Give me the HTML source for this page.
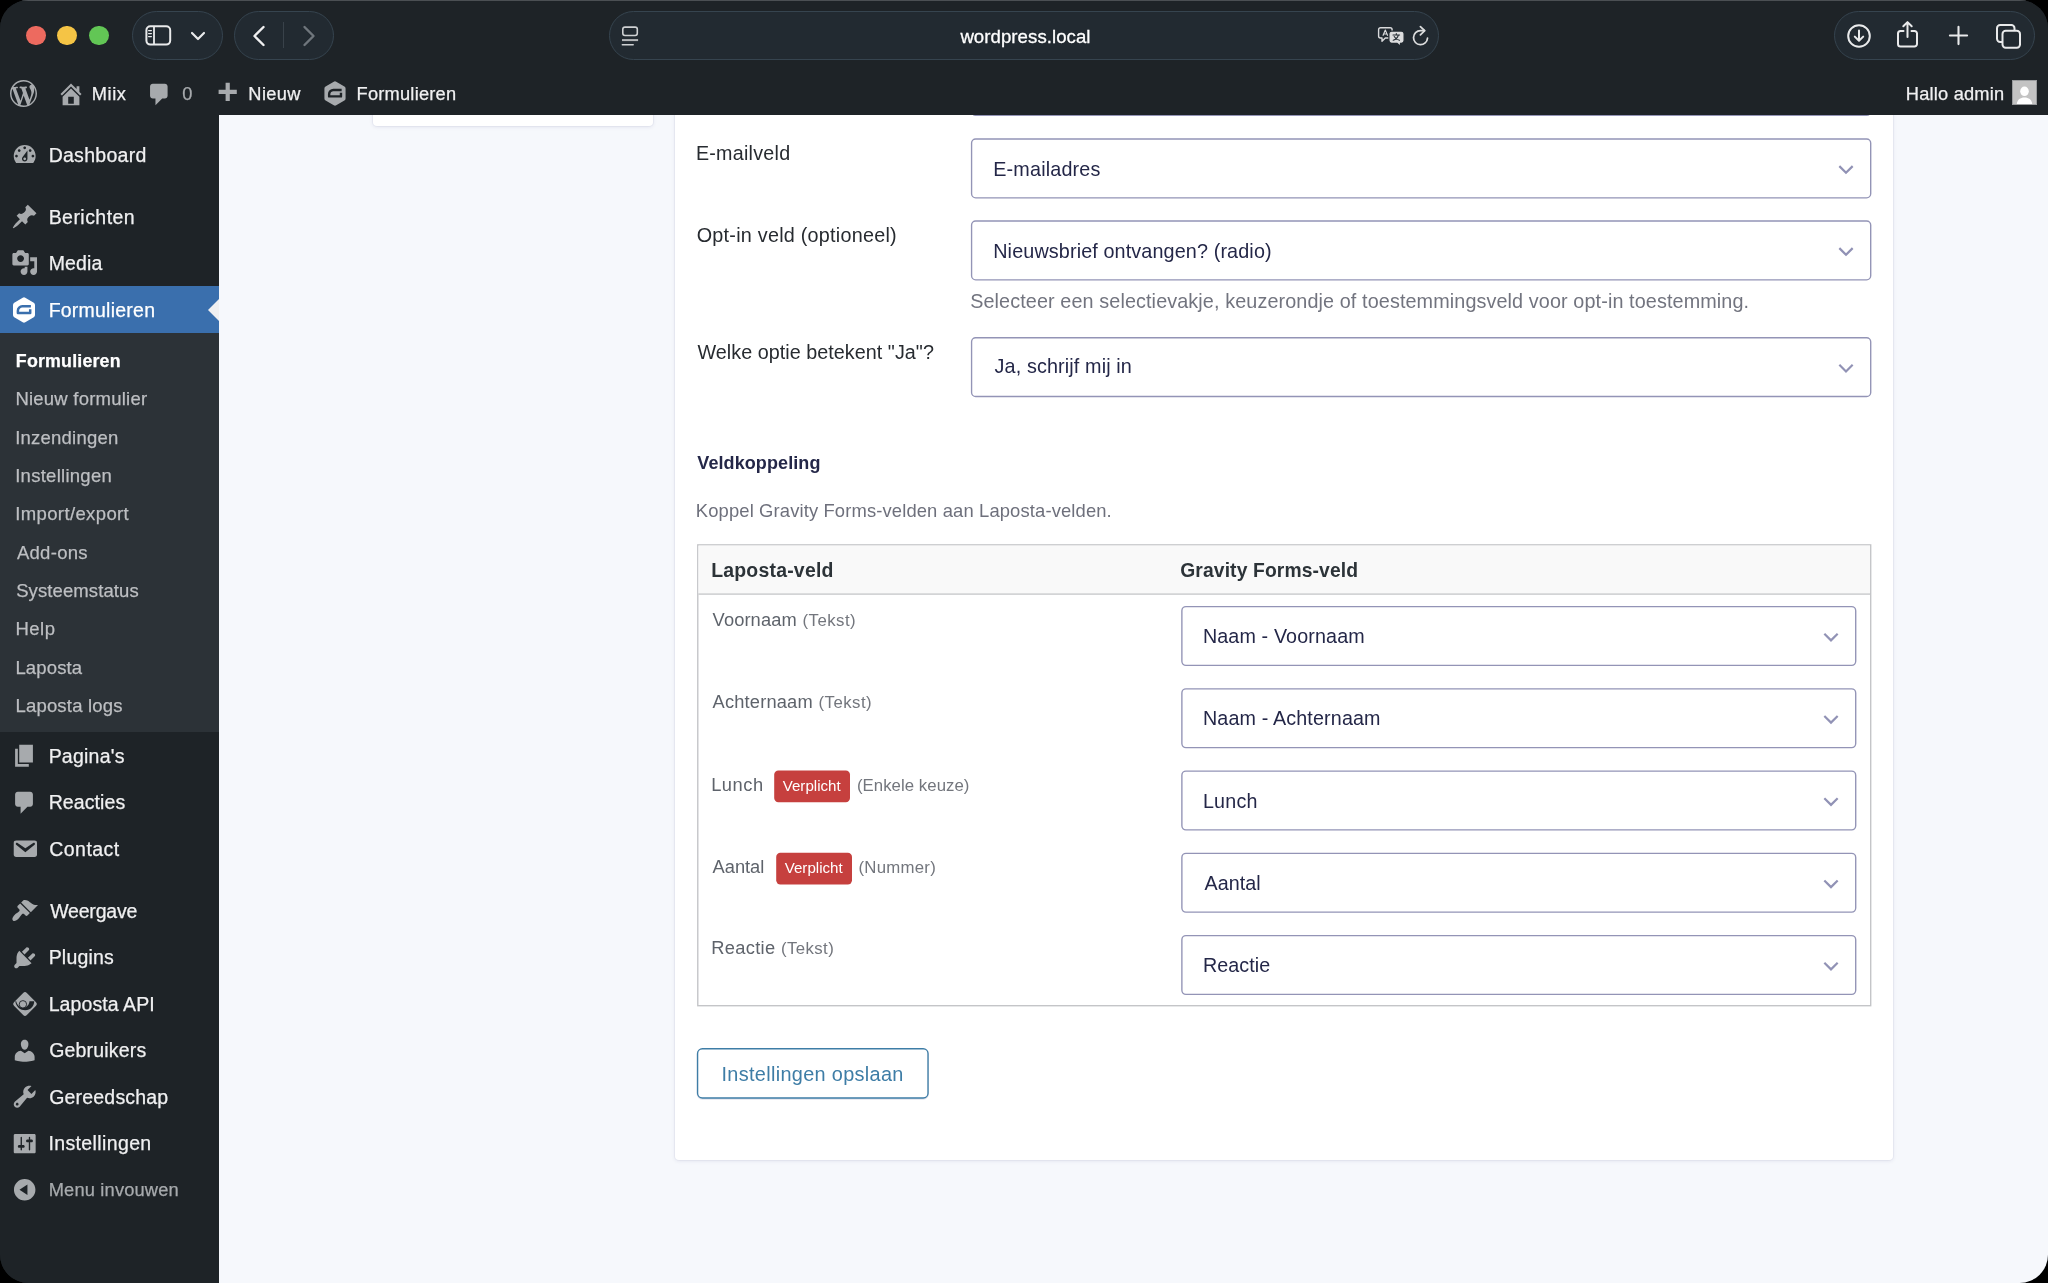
<!DOCTYPE html>
<html lang="nl">
<head>
<meta charset="utf-8">
<title>wordpress.local</title>
<style>
*{box-sizing:border-box;margin:0;padding:0}
html,body{width:2048px;height:1283px;overflow:hidden;background:#000}
body{font-family:"Liberation Sans",sans-serif;position:relative}
#win{position:absolute;left:0;top:0;width:2048px;height:1283px;border-radius:28.500px;overflow:hidden;background:#1e2327;will-change:transform}
#bg{position:absolute;left:219px;top:115px;width:1829px;height:1168px;background:#f6f8fc}
.abs{position:absolute}
.t{position:absolute;white-space:nowrap;line-height:1}
#chrome{position:absolute;left:0;top:0;width:2048px;height:72px;background:#1e2327}
#topline{position:absolute;left:0;top:0;width:2048px;height:1px;background:#4b4f53}
.tl{position:absolute;top:25.700px;width:19.500px;height:19.500px;border-radius:50%}
.pill{position:absolute;top:11px;height:49px;border-radius:25px;background:#222a31;border:1px solid #36444f}
#adminbar{position:absolute;left:0;top:72px;width:2048px;height:43px}
#adminbar .t{color:#f0f0f1;font-size:18.250px;top:13px;-webkit-text-stroke:0.250px currentColor}
#card{position:absolute;left:675px;top:100px;width:1218px;height:1060px;background:#fff;border-radius:4px;box-shadow:0 1px 4px rgba(18,25,97,.09),0 0 0 1px rgba(18,25,97,.035)}
#lcard{position:absolute;left:373px;top:100px;width:280px;height:26px;background:#fff;border-radius:4px;box-shadow:0 1px 4px rgba(18,25,97,.09),0 0 0 1px rgba(18,25,97,.035)}
.sel{position:absolute;background:#fff;border:1.400px solid #9092b4;border-radius:5px}
</style>
</head>
<body>
<div id="win">
<!-- main content -->
<div id="bg"></div><div id="lcard"></div><div id="card"></div>
<svg class="abs" style="left:0;top:0" width="2048" height="1283" viewBox="0 0 2048 1283"><rect x="971.58" y="56.69" width="899.13" height="58.73" rx="4.100" fill="#fff" stroke="#9394b6" stroke-width="1.37"/><path d="M1839.33 83.78L1846.00 90.45L1852.67 83.78" fill="none" stroke="#9192b5" stroke-width="2.200"/><rect x="971.58" y="138.99" width="899.13" height="58.83" rx="4.100" fill="#fff" stroke="#9394b6" stroke-width="1.37"/><path d="M1839.33 166.13L1846.00 172.80L1852.67 166.13" fill="none" stroke="#9192b5" stroke-width="2.200"/><rect x="971.58" y="220.99" width="899.13" height="58.83" rx="4.100" fill="#fff" stroke="#9394b6" stroke-width="1.37"/><path d="M1839.33 248.13L1846.00 254.80L1852.67 248.13" fill="none" stroke="#9192b5" stroke-width="2.200"/><rect x="971.58" y="337.69" width="899.13" height="58.83" rx="4.100" fill="#fff" stroke="#9394b6" stroke-width="1.37"/><path d="M1839.33 364.83L1846.00 371.50L1852.67 364.83" fill="none" stroke="#9192b5" stroke-width="2.200"/><rect x="697.78" y="544.88" width="1172.93" height="460.83" fill="#fff" stroke="#c3c4c7" stroke-width="1.37"/><rect x="698.47" y="545.57" width="1171.56" height="47.83" fill="#f9f9f9"/><rect x="698.47" y="593.400" width="1171.56" height="1.37" fill="#c7c8ca"/><rect x="1181.88" y="606.58" width="673.83" height="58.83" rx="4.100" fill="#fff" stroke="#9394b6" stroke-width="1.37"/><path d="M1824.33 633.73L1831.00 640.40L1837.67 633.73" fill="none" stroke="#9192b5" stroke-width="2.200"/><rect x="1181.88" y="688.83" width="673.83" height="58.83" rx="4.100" fill="#fff" stroke="#9394b6" stroke-width="1.37"/><path d="M1824.33 715.98L1831.00 722.65L1837.67 715.98" fill="none" stroke="#9192b5" stroke-width="2.200"/><rect x="1181.88" y="771.08" width="673.83" height="58.83" rx="4.100" fill="#fff" stroke="#9394b6" stroke-width="1.37"/><path d="M1824.33 798.23L1831.00 804.90L1837.67 798.23" fill="none" stroke="#9192b5" stroke-width="2.200"/><rect x="774.2" y="770.50" width="75.800" height="31.700" rx="4.200" fill="#c6403e"/><rect x="1181.88" y="853.33" width="673.83" height="58.83" rx="4.100" fill="#fff" stroke="#9394b6" stroke-width="1.37"/><path d="M1824.33 880.48L1831.00 887.15L1837.67 880.48" fill="none" stroke="#9192b5" stroke-width="2.200"/><rect x="776.2" y="852.75" width="75.800" height="31.700" rx="4.200" fill="#c6403e"/><rect x="1181.88" y="935.58" width="673.83" height="58.83" rx="4.100" fill="#fff" stroke="#9394b6" stroke-width="1.37"/><path d="M1824.33 962.73L1831.00 969.40L1837.67 962.73" fill="none" stroke="#9192b5" stroke-width="2.200"/><rect x="697.58" y="1049.58" width="230.43" height="49.23" rx="4.800" fill="none" stroke="rgba(18,25,97,.12)" stroke-width="1.9700000000000002"/><rect x="697.58" y="1048.78" width="230.43" height="49.23" rx="4.800" fill="#fff" stroke="#3e7da6" stroke-width="1.37"/></svg>
<div class="t" style="left:695.92px;top:144px;font-size:19.7px;color:#272b30;letter-spacing:0.258px;">E-mailveld</div>
<div class="t" style="left:993.22px;top:160px;font-size:19.75px;color:#242748;letter-spacing:0.181px;">E-mailadres</div>
<div class="t" style="left:696.71px;top:226px;font-size:19.8px;color:#272b30;letter-spacing:0.243px;">Opt-in veld (optioneel)</div>
<div class="t" style="left:993.22px;top:242px;font-size:19.8px;color:#242748;letter-spacing:0.120px;">Nieuwsbrief ontvangen? (radio)</div>
<div class="t" style="left:970.21px;top:292px;font-size:19.8px;color:#72747f;letter-spacing:0.109px;">Selecteer een selectievakje, keuzerondje of toestemmingsveld voor opt-in toestemming.</div>
<div class="t" style="left:697.50px;top:343px;font-size:19.77px;color:#272b30;letter-spacing:0.030px;">Welke optie betekent &quot;Ja&quot;?</div>
<div class="t" style="left:994.60px;top:357px;font-size:19.8px;color:#242748;letter-spacing:0.117px;">Ja, schrijf mij in</div>
<div class="t" style="left:697.30px;top:454px;font-size:18.0px;color:#242748;font-weight:700;letter-spacing:0.090px;">Veldkoppeling</div>
<div class="t" style="left:695.83px;top:502px;font-size:18.4px;color:#6e707c;letter-spacing:0.130px;">Koppel Gravity Forms-velden aan Laposta-velden.</div>
<div class="t" style="left:711.13px;top:561px;font-size:19.45px;color:#2c3338;font-weight:700;letter-spacing:0.217px;">Laposta-veld</div>
<div class="t" style="left:1180.23px;top:561px;font-size:19.3px;color:#2c3338;font-weight:700;letter-spacing:0.120px;">Gravity Forms-veld</div>
<div class="t" style="left:712.60px;top:611px;font-size:18.3px;color:#5e636b;letter-spacing:0.104px;">Voornaam</div>
<div class="t" style="left:802.49px;top:613px;font-size:16.8px;color:#73767d;letter-spacing:0.466px;">(Tekst)</div>
<div class="t" style="left:1202.92px;top:627px;font-size:19.7px;color:#242748;letter-spacing:0.140px;">Naam - Voornaam</div>
<div class="t" style="left:712.60px;top:693px;font-size:18.3px;color:#5e636b;letter-spacing:0.165px;">Achternaam</div>
<div class="t" style="left:818.49px;top:695px;font-size:16.8px;color:#73767d;letter-spacing:0.466px;">(Tekst)</div>
<div class="t" style="left:1202.92px;top:709px;font-size:19.7px;color:#242748;letter-spacing:0.159px;">Naam - Achternaam</div>
<div class="t" style="left:711.14px;top:776px;font-size:18.3px;color:#5e636b;letter-spacing:0.533px;">Lunch</div>
<div class="t" style="left:782.70px;top:778px;font-size:15.1px;color:#fff;letter-spacing:0.019px;">Verplicht</div>
<div class="t" style="left:856.89px;top:778px;font-size:16.8px;color:#73767d;letter-spacing:0.050px;">(Enkele keuze)</div>
<div class="t" style="left:1202.92px;top:792px;font-size:19.7px;color:#242748;letter-spacing:0.252px;">Lunch</div>
<div class="t" style="left:712.60px;top:858px;font-size:18.3px;color:#5e636b;letter-spacing:-0.030px;">Aantal</div>
<div class="t" style="left:784.70px;top:860px;font-size:15.1px;color:#fff;letter-spacing:0.019px;">Verplicht</div>
<div class="t" style="left:858.39px;top:860px;font-size:16.8px;color:#73767d;letter-spacing:0.272px;">(Nummer)</div>
<div class="t" style="left:1204.50px;top:874px;font-size:19.7px;color:#242748;letter-spacing:0.073px;">Aantal</div>
<div class="t" style="left:711.14px;top:939px;font-size:18.3px;color:#5e636b;letter-spacing:0.346px;">Reactie</div>
<div class="t" style="left:780.89px;top:941px;font-size:16.8px;color:#73767d;letter-spacing:0.416px;">(Tekst)</div>
<div class="t" style="left:1202.92px;top:956px;font-size:19.7px;color:#242748;letter-spacing:0.082px;">Reactie</div>
<div class="t" style="left:721.51px;top:1065px;font-size:19.9px;color:#3e7da6;letter-spacing:0.316px;">Instellingen opslaan</div>
<!-- sidebar -->
<div class="abs" style="left:0;top:115px;width:219px;height:1168px;background:#1e2327"></div>
<div class="abs" style="left:0;top:286px;width:219px;height:46.600px;background:#3a6fad"></div>
<div class="abs" style="left:0;top:332.500px;width:219px;height:399.500px;background:#2c3237"></div>
<svg class="abs" style="left:11.00px;top:140.80px" width="27.4" height="27.4" viewBox="0 0 20 20"><path fill="#a7aaad" d="M3.760 16h12.480c1.100-1.370 1.760-3.110 1.760-5 0-4.420-3.580-8-8-8s-8 3.580-8 8c0 1.890.660 3.630 1.760 5zM10 4c.550 0 1 .450 1 1s-.450 1-1 1-1-.450-1-1 .450-1 1-1zM6 6c.550 0 1 .450 1 1s-.450 1-1 1-1-.450-1-1 .450-1 1-1zm8 0c.550 0 1 .450 1 1s-.450 1-1 1-1-.450-1-1 .450-1 1-1zm-5.370 5.550L12 7v6c0 1.100-.900 2-2 2s-2-.900-2-2c0-.570.240-1.080.630-1.450zM4 10c.550 0 1 .450 1 1s-.450 1-1 1-1-.450-1-1 .450-1 1-1zm12 0c.550 0 1 .450 1 1s-.450 1-1 1-1-.450-1-1 .450-1 1-1zm-5 3c0-.550-.450-1-1-1s-1 .450-1 1 .450 1 1 1 1-.450 1-1z"/></svg>
<div class="t" style="left:48.64px;top:146px;font-size:19.5px;color:#f0f0f1;letter-spacing:0.282px;-webkit-text-stroke:0.250px #f0f0f1;">Dashboard</div>
<svg class="abs" style="left:11.00px;top:202.80px" width="27.4" height="27.4" viewBox="0 0 20 20"><path fill="#a7aaad" d="M10.440 3.020l1.820-1.820 6.360 6.350-1.830 1.820c-1.050-.680-2.480-.570-3.410.360l-.750.750c-.920.930-1.040 2.350-.350 3.410l-1.830 1.820-2.410-2.410-2.800 2.790c-.420.420-3.380 2.710-3.800 2.290s1.860-3.390 2.280-3.810l2.790-2.790L4.100 9.360l1.830-1.820c1.050.690 2.480.570 3.400-.360l.750-.750c.930-.920 1.050-2.350.360-3.410z"/></svg>
<div class="t" style="left:48.64px;top:208px;font-size:19.5px;color:#f0f0f1;letter-spacing:0.459px;-webkit-text-stroke:0.250px #f0f0f1;">Berichten</div>
<svg class="abs" style="left:11.00px;top:249.00px" width="27.4" height="27.4" viewBox="0 0 20 20"><path fill="#a7aaad" d="M13 11V4c0-.550-.450-1-1-1h-1.670L9 1H5L3.670 3H2c-.550 0-1 .450-1 1v7c0 .550.450 1 1 1h10c.550 0 1-.450 1-1zM7 4.500c1.380 0 2.500 1.120 2.500 2.500S8.380 9.500 7 9.500 4.500 8.380 4.500 7 5.620 4.500 7 4.500zM14 6h5v10.500c0 1.380-1.120 2.500-2.500 2.500S14 17.880 14 16.500s1.120-2.500 2.500-2.500c.170 0 .340.020.500.050V9h-3V6zm-4 8.050V13h2v3.500c0 1.380-1.120 2.500-2.500 2.500S7 17.880 7 16.500 8.120 14 9.500 14c.170 0 .340.020.500.050z"/></svg>
<div class="t" style="left:48.64px;top:254px;font-size:19.5px;color:#f0f0f1;letter-spacing:0.144px;-webkit-text-stroke:0.250px #f0f0f1;">Media</div>
<svg class="abs" style="left:11.00px;top:742.30px" width="27.4" height="27.4" viewBox="0 0 20 20"><path fill="#a7aaad" d="M6 15V2h10v13H6zm-1 1h8v2H3V5h2v11z"/></svg>
<div class="t" style="left:48.64px;top:747px;font-size:19.5px;color:#f0f0f1;letter-spacing:0.236px;-webkit-text-stroke:0.250px #f0f0f1;">Pagina's</div>
<svg class="abs" style="left:11.00px;top:788.80px" width="27.4" height="27.4" viewBox="0 0 20 20"><path fill="#a7aaad" d="M5 2h9c1.100 0 2 .900 2 2v7c0 1.100-.900 2-2 2h-2l-5 5v-5H5c-1.100 0-2-.900-2-2V4c0-1.100.900-2 2-2z"/></svg>
<div class="t" style="left:48.64px;top:793px;font-size:19.5px;color:#f0f0f1;letter-spacing:0.111px;-webkit-text-stroke:0.250px #f0f0f1;">Reacties</div>
<svg class="abs" style="left:11.00px;top:835.30px" width="27.4" height="27.4" viewBox="0 0 20 20"><path fill="#a7aaad" d="M3.870 4h13.250C18.370 4 19 4.590 19 5.790v8.420c0 1.190-.630 1.790-1.880 1.790H3.870c-1.250 0-1.880-.600-1.880-1.790V5.790c0-1.200.630-1.790 1.880-1.790zm6.620 8.600l6.740-5.530c.240-.200.430-.660.130-1.070-.290-.410-.820-.420-1.170-.170l-5.700 3.860L4.800 5.830c-.350-.250-.880-.240-1.170.170-.300.410-.110.870.130 1.070z"/></svg>
<div class="t" style="left:49.23px;top:840px;font-size:19.5px;color:#f0f0f1;letter-spacing:0.472px;-webkit-text-stroke:0.250px #f0f0f1;">Contact</div>
<svg class="abs" style="left:11.00px;top:897.10px" width="27.4" height="27.4" viewBox="0 0 20 20"><path fill="#a7aaad" d="M14.480 11.060L7.410 3.990l1.500-1.500c.500-.560 2.300-.470 3.510.320 1.210.800 1.430 1.280 2.910 2.100 1.180.640 2.450 1.260 4.450.850zm-.710.710L6.700 4.700 4.930 6.470c-.390.390-.390 1.020 0 1.410l1.060 1.060c.390.390.390 1.030 0 1.420-.600.600-1.430 1.110-2.210 1.690-.350.260-.700.530-1.010.840C1.430 14.230.400 16.080 1.400 17.070c.990 1 2.840-.030 4.180-1.360.310-.310.580-.660.850-1.020.570-.780 1.080-1.610 1.690-2.210.390-.390 1.020-.390 1.410 0l1.060 1.060c.390.390 1.020.390 1.410 0z"/></svg>
<div class="t" style="left:50.20px;top:902px;font-size:19.5px;color:#f0f0f1;letter-spacing:-0.188px;-webkit-text-stroke:0.250px #f0f0f1;">Weergave</div>
<svg class="abs" style="left:11.00px;top:943.60px" width="27.4" height="27.4" viewBox="0 0 20 20"><path fill="#a7aaad" d="M13.110 4.360L9.870 7.600 8 5.730l3.240-3.240c.350-.340 1.050-.200 1.560.320.520.510.660 1.210.310 1.550zm-8 1.770l.910-1.120 9.010 9.010-1.190.840c-.710.710-2.630 1.160-3.820 1.160H6.140L4.900 17.260c-.590.590-1.540.590-2.120 0-.590-.580-.590-1.530 0-2.120l1.240-1.240v-3.880c0-1.130.400-3.190 1.090-3.890zm7.260 3.970l3.240-3.240c.340-.350 1.040-.210 1.550.310.520.510.660 1.210.310 1.550l-3.240 3.250z"/></svg>
<div class="t" style="left:48.64px;top:948px;font-size:19.5px;color:#f0f0f1;letter-spacing:0.215px;-webkit-text-stroke:0.250px #f0f0f1;">Plugins</div>
<svg class="abs" style="left:11.00px;top:1036.80px" width="27.4" height="27.4" viewBox="0 0 20 20"><path fill="#a7aaad" d="M10 9.250c-2.270 0-2.730-3.440-2.730-3.440C7 4.020 7.820 2 9.970 2c2.160 0 2.980 2.020 2.710 3.810 0 0-.410 3.440-2.680 3.440zm0 2.570L12.720 10c2.390 0 4.520 2.330 4.520 4.530v2.490s-3.650 1.130-7.240 1.130c-3.650 0-7.240-1.130-7.240-1.130v-2.490c0-2.250 1.940-4.480 4.470-4.480z"/></svg>
<div class="t" style="left:49.23px;top:1041px;font-size:19.5px;color:#f0f0f1;letter-spacing:0.177px;-webkit-text-stroke:0.250px #f0f0f1;">Gebruikers</div>
<svg class="abs" style="left:11.00px;top:1083.30px" width="27.4" height="27.4" viewBox="0 0 20 20"><path fill="#a7aaad" d="M16.680 9.770c-1.340 1.340-3.300 1.670-4.950.990l-5.410 6.520c-.990.990-2.590.990-3.580 0s-.990-2.590 0-3.570l6.520-5.420c-.680-1.650-.350-3.610.990-4.950 1.280-1.280 3.120-1.620 4.720-1.060l-2.890 2.890 2.820 2.820 2.860-2.870c.530 1.580.180 3.390-1.080 4.650zM3.810 16.210c.400.390 1.040.390 1.430 0 .400-.400.400-1.040 0-1.430-.390-.400-1.030-.400-1.430 0-.390.390-.390 1.030 0 1.430z"/></svg>
<div class="t" style="left:49.23px;top:1088px;font-size:19.5px;color:#f0f0f1;letter-spacing:0.190px;-webkit-text-stroke:0.250px #f0f0f1;">Gereedschap</div>
<svg class="abs" style="left:11.00px;top:1129.80px" width="27.4" height="27.4" viewBox="0 0 20 20"><path fill="#a7aaad" d="M18 16V4c0-.550-.450-1-1-1H3c-.550 0-1 .450-1 1v12c0 .550.450 1 1 1h14c.550 0 1-.450 1-1zM8 11h1c.550 0 1 .450 1 1s-.450 1-1 1H8v1.500c0 .280-.220.500-.500.500s-.500-.220-.500-.500V13H6c-.550 0-1-.450-1-1s.450-1 1-1h1V5.500c0-.280.220-.500.500-.500s.500.220.500.500V11zm5-2h-1c-.550 0-1-.450-1-1s.450-1 1-1h1V5.500c0-.280.220-.500.500-.500s.500.220.500.500V7h1c.550 0 1 .450 1 1s-.450 1-1 1h-1v5.500c0 .280-.220.500-.500.500s-.500-.220-.500-.500V9z"/></svg>
<div class="t" style="left:48.45px;top:1134px;font-size:19.5px;color:#f0f0f1;letter-spacing:0.373px;-webkit-text-stroke:0.250px #f0f0f1;">Instellingen</div>
<svg class="abs" style="left:13.100px;top:297.050px" width="22" height="26" viewBox="0 0 22 26"><path d="M11 2.890L19.500 7.910V18.090L11 23.110L2.500 18.090V7.910Z" fill="#fff" stroke="#fff" stroke-width="5" stroke-linejoin="round"/><path d="M17.900 9.300H9.300A4.400 4.400 0 0 0 4.900 13.700V16H17.200V12.200" fill="none" stroke="#3a6fad" stroke-width="2.500" stroke-linejoin="round"/></svg>
<div class="t" style="left:48.64px;top:301px;font-size:19.5px;color:#fff;letter-spacing:0.232px;-webkit-text-stroke:0.250px #fff;">Formulieren</div>
<svg class="abs" style="left:208.200px;top:298.500px" width="11" height="22" viewBox="0 0 11 22"><path d="M11 0L0 11l11 11z" fill="#f0f0f1"/></svg>
<svg class="abs" style="left:10.700px;top:989.700px" width="28" height="28" viewBox="0 0 28 28"><rect x="4.900" y="4.900" width="18.200" height="18.200" rx="2.600" transform="rotate(45 14 14)" fill="#a7aaad"/><path d="M4.300 11.300C5 17 9.500 20.300 14.200 20.300C19.500 20.300 23.200 16 23.200 11.300L18.500 11.300C18.300 14.500 16 17.600 12.200 17.600C8.500 17.600 6 15 5.200 11.300Z" fill="#1e2327"/><circle cx="11.900" cy="14.300" r="3.700" fill="#a7aaad" stroke="#1e2327" stroke-width="0.900"/></svg>
<div class="t" style="left:48.64px;top:995px;font-size:19.5px;color:#f0f0f1;letter-spacing:0.093px;-webkit-text-stroke:0.250px #f0f0f1;">Laposta API</div>
<svg class="abs" style="left:11.00px;top:1176.00px" width="27.4" height="27.4" viewBox="0 0 20 20"><path fill="#a7aaad" d="M10 2.160c4.330 0 7.840 3.510 7.840 7.840s-3.510 7.840-7.840 7.840S2.160 14.330 2.160 10 5.670 2.160 10 2.160zm2 11.720V6.120L6.180 9.970z"/></svg>
<div class="t" style="left:48.74px;top:1181px;font-size:18.3px;color:#a7aaad;letter-spacing:0.159px;-webkit-text-stroke:0.250px #a7aaad;">Menu invouwen</div>
<div class="t" style="left:15.83px;top:353px;font-size:17.8px;color:#fff;font-weight:700;letter-spacing:0.199px;-webkit-text-stroke:0.250px #fff;">Formulieren</div>
<div class="t" style="left:15.42px;top:390px;font-size:18.5px;color:#bdbfc2;letter-spacing:0.230px;-webkit-text-stroke:0.250px #bdbfc2;">Nieuw formulier</div>
<div class="t" style="left:15.23px;top:429px;font-size:18.5px;color:#bdbfc2;letter-spacing:0.219px;-webkit-text-stroke:0.250px #bdbfc2;">Inzendingen</div>
<div class="t" style="left:15.23px;top:467px;font-size:18.5px;color:#bdbfc2;letter-spacing:0.265px;-webkit-text-stroke:0.250px #bdbfc2;">Instellingen</div>
<div class="t" style="left:15.23px;top:505px;font-size:18.5px;color:#bdbfc2;letter-spacing:0.378px;-webkit-text-stroke:0.250px #bdbfc2;">Import/export</div>
<div class="t" style="left:16.90px;top:544px;font-size:18.5px;color:#bdbfc2;letter-spacing:0.292px;-webkit-text-stroke:0.250px #bdbfc2;">Add-ons</div>
<div class="t" style="left:16.16px;top:582px;font-size:18.5px;color:#bdbfc2;letter-spacing:0.106px;-webkit-text-stroke:0.250px #bdbfc2;">Systeemstatus</div>
<div class="t" style="left:15.42px;top:620px;font-size:18.5px;color:#bdbfc2;letter-spacing:0.534px;-webkit-text-stroke:0.250px #bdbfc2;">Help</div>
<div class="t" style="left:15.42px;top:659px;font-size:18.5px;color:#bdbfc2;letter-spacing:0.146px;-webkit-text-stroke:0.250px #bdbfc2;">Laposta</div>
<div class="t" style="left:15.42px;top:697px;font-size:18.5px;color:#bdbfc2;letter-spacing:0.202px;-webkit-text-stroke:0.250px #bdbfc2;">Laposta logs</div>
<!-- safari chrome + wp admin bar -->
<div id="chrome">

<div class="tl" style="left:26px;background:#ed6a5f"></div>
<div class="tl" style="left:57px;background:#f5c445"></div>
<div class="tl" style="left:89px;background:#62c655"></div>

<div class="pill" style="left:132px;width:91px"></div>
<svg class="abs" style="left:144px;top:24px" width="28" height="23" viewBox="0 0 28 23" fill="none" stroke="#e9eaeb" stroke-width="2"><rect x="2.400" y="2.200" width="23.800" height="18.400" rx="4"/><line x1="10" y1="2.200" x2="10" y2="20.600" stroke-width="1.800"/><g stroke-width="1.300" stroke-linecap="round"><line x1="4.600" y1="6.600" x2="7.400" y2="6.600"/><line x1="4.600" y1="9.600" x2="7.400" y2="9.600"/><line x1="4.600" y1="12.600" x2="7.400" y2="12.600"/></g></svg>
<svg class="abs" style="left:190px;top:31px" width="16" height="10" viewBox="0 0 16 10" fill="none" stroke="#e9eaeb" stroke-width="2.2" stroke-linecap="round" stroke-linejoin="round"><path d="M2 2l6 6 6-6"/></svg>

<div class="pill" style="left:234px;width:100px"></div>
<svg class="abs" style="left:252px;top:25px" width="14" height="22" viewBox="0 0 14 22" fill="none" stroke="#f0f0f1" stroke-width="2.4" stroke-linecap="round" stroke-linejoin="round"><path d="M11.5 2L2.5 11l9 9"/></svg>
<div class="abs" style="left:283px;top:22px;width:1px;height:26px;background:#39424a"></div>
<svg class="abs" style="left:302px;top:25px" width="14" height="22" viewBox="0 0 14 22" fill="none" stroke="#6f767c" stroke-width="2.4" stroke-linecap="round" stroke-linejoin="round"><path d="M2.5 2l9 9-9 9"/></svg>

<div class="pill" style="left:609px;width:830px"></div>
<svg class="abs" style="left:620px;top:26px" width="20" height="21" viewBox="0 0 20 21" fill="none" stroke="#cfd1d3" stroke-width="1.600"><rect x="2.800" y="1.100" width="14.500" height="8.400" rx="2.200"/><line x1="2" y1="14.100" x2="18.100" y2="14.100" stroke="#b5b7b9" stroke-width="2"/><line x1="2.300" y1="18.650" x2="13.200" y2="18.650" stroke-width="1.500" stroke-linecap="round"/></svg>
<div class="t" style="left:960.39px;top:28px;font-size:18.6px;color:#fff;letter-spacing:0.068px;-webkit-text-stroke:0.300px #fff;">wordpress.local</div>
<!-- translate icon -->
<svg class="abs" style="left:1376px;top:25px" width="30" height="24" viewBox="0 0 30 24">
<path d="M4.500 2.800h9.700a1.900 1.900 0 0 1 1.900 1.900v6.400a1.900 1.900 0 0 1-1.900 1.900H9.300l-3.300 3.200v-3.200H4.500a1.900 1.900 0 0 1-1.900-1.900V4.700a1.900 1.900 0 0 1 1.900-1.900z" fill="none" stroke="#d9dadc" stroke-width="1.400" stroke-linejoin="round"/>
<path d="M6.900 10.700L9.300 5.100l2.400 5.600M7.700 9h3.200" fill="none" stroke="#d9dadc" stroke-width="1.150" stroke-linejoin="round"/>
<path d="M15.600 6.100h9.800a2.700 2.700 0 0 1 2.700 2.700v6.800a2.700 2.700 0 0 1-2.700 2.700h-.900v2.900l-3.500-2.900h-5.400a2.700 2.700 0 0 1-2.700-2.700V8.800a2.700 2.700 0 0 1 2.700-2.700z" fill="#dcddde" stroke="#222a31" stroke-width="1.200"/>
<path d="M17 10h6.600M20.300 8.600V10M22.400 10c-.7 2.600-2.700 4.500-5.200 5.300M18.200 11.500c1 1.900 2.900 3.300 5.300 3.800" fill="none" stroke="#222a31" stroke-width="1.050" stroke-linecap="round"/>
</svg>
<svg class="abs" style="left:1408px;top:22px" width="28" height="28" viewBox="0 0 28 28" fill="none" stroke="#dcddde" stroke-width="1.750" stroke-linecap="round" stroke-linejoin="round"><path d="M19.500 16.200A7 7 0 1 1 12.500 8.700H16.400"/><path d="M12.400 4.600L16.700 8.700L12.400 12.900"/></svg>

<div class="pill" style="left:1834px;width:201px"></div>
<svg class="abs" style="left:1846px;top:23px" width="26" height="26" viewBox="0 0 26 26" fill="none" stroke="#e9eaeb" stroke-width="2" stroke-linecap="round" stroke-linejoin="round"><circle cx="13" cy="13" r="10.800"/><path d="M13 7.500v10M8.800 13.600l4.200 4.200 4.200-4.200"/></svg>
<svg class="abs" style="left:1896px;top:20px" width="23" height="29" viewBox="0 0 23 29" fill="none" stroke="#e9eaeb" stroke-width="2" stroke-linecap="round" stroke-linejoin="round"><path d="M7.500 11H4.500a2.500 2.500 0 0 0-2.500 2.500v10.500a2.500 2.500 0 0 0 2.500 2.500h14a2.500 2.500 0 0 0 2.500-2.500V13.500a2.500 2.500 0 0 0-2.500-2.500h-3"/><path d="M11.500 17V2.500M7.300 6.300l4.200-4.200 4.200 4.200"/></svg>
<svg class="abs" style="left:1947.500px;top:25px" width="21" height="21" viewBox="0 0 22 22" fill="none" stroke="#e9eaeb" stroke-width="2.200" stroke-linecap="round"><path d="M11 2v18M2 11h18"/></svg>
<svg class="abs" style="left:1994px;top:21.600px" width="28" height="28" viewBox="0 0 28 28" fill="none" stroke="#e9eaeb" stroke-width="2" stroke-linejoin="round"><rect x="3" y="3" width="17.500" height="17" rx="3.200"/><rect x="8.500" y="8.700" width="17.500" height="17" rx="3.200" fill="#212930"/></svg>

</div>
<div class="abs" style="left:0;top:72px;width:2048px;height:43px;background:#1e2327"></div>
<div id="adminbar">

<svg class="abs" style="left:10px;top:8px" width="27" height="27" viewBox="0 0 20 20"><path fill="#a7aaad" d="M20 10c0-5.510-4.490-10-10-10C4.480 0 0 4.490 0 10c0 5.520 4.480 10 10 10 5.510 0 10-4.480 10-10zM7.780 15.370L4.370 6.220c.550-.020 1.170-.080 1.170-.080.500-.060.440-1.130-.060-1.110 0 0-1.450.110-2.370.110-.180 0-.370 0-.580-.010C4.120 2.690 6.870 1.110 10 1.110c2.330 0 4.450.870 6.050 2.340-.680-.110-1.650.390-1.650 1.580 0 .740.450 1.360.900 2.100.350.610.550 1.360.550 2.460 0 1.490-1.400 5-1.400 5l-3.030-8.370c.540-.020.820-.170.820-.170.500-.050.440-1.250-.060-1.220 0 0-1.440.120-2.380.120-.870 0-2.330-.120-2.330-.120-.500-.030-.560 1.200-.060 1.220l.920.080 1.260 3.410zM17.410 10c.240-.640.740-1.870.430-4.250.700 1.290 1.050 2.710 1.050 4.250 0 3.290-1.730 6.240-4.400 7.780.970-2.590 1.940-5.200 2.920-7.780zM6.100 18.090C3.120 16.650 1.110 13.530 1.110 10c0-1.300.230-2.480.720-3.590C3.250 10.300 4.670 14.200 6.100 18.090zm4.030-6.630l2.580 6.980c-.860.290-1.760.450-2.710.450-.790 0-1.570-.110-2.290-.330.810-2.380 1.620-4.740 2.420-7.100z"/></svg>
<svg class="abs" style="left:57px;top:8px" width="28" height="28" viewBox="0 0 20 20"><path fill="#a7aaad" d="M16 8.500l1.530 1.530-1.060 1.060L10 4.620l-6.470 6.470-1.060-1.060L10 2.500l4 4v-2h2v4zm-6-2.460l6 5.990V18H4v-5.970zM12 17v-5H8v5h4z"/></svg>
<svg class="abs" style="left:146px;top:9px" width="27" height="27" viewBox="0 0 20 20"><path fill="#a7aaad" d="M5 2h9c1.100 0 2 .900 2 2v7c0 1.100-.900 2-2 2h-2l-5 5v-5H5c-1.100 0-2-.900-2-2V4c0-1.100.900-2 2-2z"/></svg>
<svg class="abs" style="left:213px;top:8px" width="28" height="28" viewBox="0 0 20 20"><path fill="#a7aaad" d="M17 7v3h-5v5H9v-5H4V7h5V2h3v5h5z"/></svg>
<svg class="abs" style="left:324px;top:9.300px" width="22" height="25" viewBox="0 0 22 26"><path d="M11 2.890L19.500 7.910V18.090L11 23.110L2.500 18.090V7.910Z" fill="#a7aaad" stroke="#a7aaad" stroke-width="5" stroke-linejoin="round"/><path d="M17.900 9.300H9.300A4.400 4.400 0 0 0 4.900 13.700V16H17.200V12.200" fill="none" stroke="#1e2327" stroke-width="2.500" stroke-linejoin="round"/></svg>
<div class="abs" style="left:2012px;top:8px;width:25px;height:25px;background:#c3c3c3;border:1px solid #9a9c9e;overflow:hidden"><svg class="abs" style="left:0;top:0" width="23" height="23" viewBox="0 0 23 23"><ellipse cx="11.500" cy="10.300" rx="4.300" ry="4.800" fill="#fff"/><path d="M3.800 23c.300-4.600 3.600-6.600 7.700-6.600s7.400 2 7.700 6.600z" fill="#fff"/></svg></div>

</div>
<div class="t" style="left:91.84px;top:85px;font-size:18.25px;color:#f0f0f1;letter-spacing:0.569px;-webkit-text-stroke:0.250px #f0f0f1;">Miix</div>
<div class="t" style="left:182.25px;top:85px;font-size:18.25px;color:#a7aaad;-webkit-text-stroke:0.250px #a7aaad;">0</div>
<div class="t" style="left:248.34px;top:85px;font-size:18.25px;color:#f0f0f1;letter-spacing:0.376px;-webkit-text-stroke:0.250px #f0f0f1;">Nieuw</div>
<div class="t" style="left:356.54px;top:85px;font-size:18.25px;color:#f0f0f1;letter-spacing:0.222px;-webkit-text-stroke:0.250px #f0f0f1;">Formulieren</div>
<div class="t" style="left:1905.84px;top:85px;font-size:18.25px;color:#f0f0f1;letter-spacing:0.192px;-webkit-text-stroke:0.250px #f0f0f1;">Hallo admin</div>
<div id="topline"></div>
</div>
</body>
</html>
